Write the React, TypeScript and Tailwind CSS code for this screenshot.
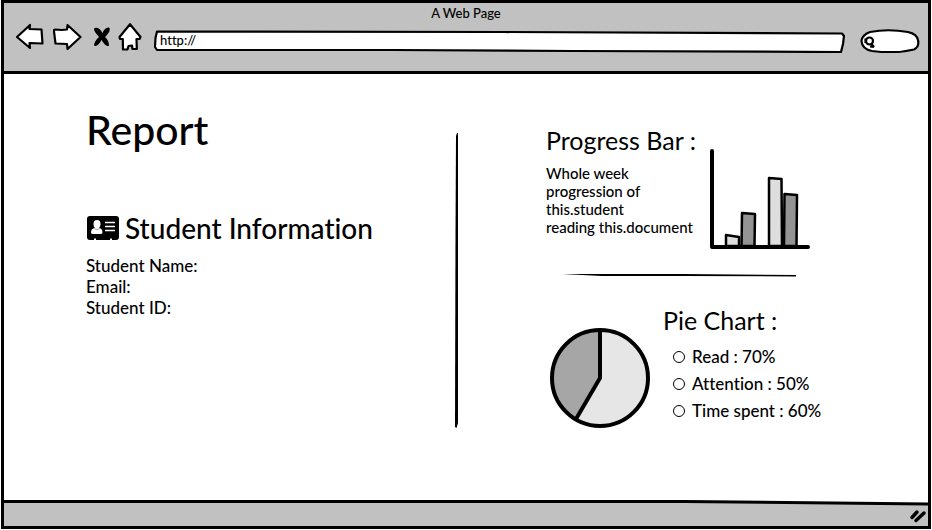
import type { ReactNode } from "react";

const infoFields = ["Student Name:", "Email:", "Student ID:"];

const pieLegend = [
  { id: "read", label: "Read : 70%" },
  { id: "attention", label: "Attention : 50%" },
  { id: "time", label: "Time spent : 60%" },
];

function NavButton({ label, children }: { label: string; children: ReactNode }) {
  return (
    <button type="button" aria-label={label} className="shrink-0">
      {children}
    </button>
  );
}

function BrowserBar() {
  return (
    <header className="flex h-[71px] flex-col border-b-3 border-black bg-[#c1c1c1]">
      <div className="pt-[2px] text-center text-[13px] leading-4 font-medium">A Web Page</div>
      <div className="flex items-center pr-2 pl-3">
        <div className="flex items-center">
          <NavButton label="Back">
            <svg width="28" height="28" viewBox="0 0 28 28" fill="#fff" stroke="#000" strokeWidth="2.200" strokeLinejoin="round">
              <path d="M1 14 14 2 13.500 6 25.500 6.500 26.500 20.500 13.500 20 14 25Z" />
            </svg>
          </NavButton>
          <NavButton label="Forward">
            <svg className="ml-[9px]" width="30" height="28" viewBox="0 0 30 28" fill="#fff" stroke="#000" strokeWidth="2.200" strokeLinejoin="round">
              <path d="M1 8.500Q.500 6.500 2.500 6.500L8.500 7 14 6.500 14.500 2 27.500 14 14.500 26 14 21 2.500 20.500Z" />
            </svg>
          </NavButton>
          <NavButton label="Stop">
            <svg className="ml-[10px]" width="18" height="20" viewBox="0 0 18 20" fill="#000">
              <path d="M1 1.500C3-.5 7 1 9.500 6 11 2 14.500-.5 16.500 1 17.500 4 15 7 12 10 14.500 12 16 15 16 18.500 14 20.500 11 17 8.500 13 6.500 17 3.500 20 1 18.500 1 16 3 12.500 6 10 3.500 7 1 4.500 1 1.500Z" />
            </svg>
          </NavButton>
          <NavButton label="Home">
            <svg className="ml-[7px]" width="24" height="28" viewBox="0 0 24 28" fill="#fff" stroke="#000" strokeWidth="2.200" strokeLinejoin="round">
              <path d="M12 1.200 22.500 14 21.500 16 18.500 16 18.800 26 14.500 26 14 22.500 10.500 23 9.500 26.500 5 26.500 4.800 16 2 16 1.500 14Z" />
            </svg>
          </NavButton>
        </div>
        <div className="relative mt-2 ml-3 h-6 min-w-0 flex-1">
          <svg className="absolute inset-0 h-full w-full" viewBox="0 0 691 24" preserveAspectRatio="none" fill="#fff" stroke="#000" strokeWidth="2.200" strokeLinejoin="round" aria-hidden="true">
            <path vectorEffect="non-scaling-stroke" d="M3 2.500 350 3 688 4.500 690 7 689 15 687 23 420 22 240 21 3 21 1 18 1.500 9Z" />
          </svg>
          <input aria-label="Address" defaultValue="http://" className="relative block h-[22px] w-full bg-transparent px-[6px] text-[13px] font-medium outline-none" />
        </div>
        <div className="relative mt-2 ml-[15px] h-6 w-[60px] shrink-0">
          <svg className="absolute inset-0 h-full w-full" viewBox="0 0 60 24" fill="none" stroke="#000" strokeWidth="2.200" aria-hidden="true">
            <path d="M10 3Q28-.5 48 3 57 5 58 11 59.500 18 54 20.500 36 25 12 22 2 20 1.500 12 2 6 10 3Z" fill="#fff" />
            <circle cx="9.500" cy="12" r="3.500" />
            <path d="M5.500 9.500 5.500 14M11 14.500 14 18M10 17.500 14 18" />
          </svg>
          <input type="search" aria-label="Search" className="relative block h-6 w-full bg-transparent pr-2 pl-4 text-[13px] outline-none" />
        </div>
      </div>
    </header>
  );
}

function IdCardIcon() {
  return (
    <svg className="shrink-0" width="32" height="24" viewBox="0 0 32 24" aria-hidden="true">
      <path d="M3 0H29Q32 0 32 3V21Q32 24 29 24H25V22.500H23V24H9V22.500H7V24H3Q0 24 0 21V3Q0 0 3 0Z" fill="#000" />
      <path d="M10 4C12.500 4 13.500 5.500 13.500 8 13.500 9.500 13 11 12 12 14.500 12.500 15.500 14 15.500 16.500Q15.500 18 13.500 18H6Q4 18 4 16.500C4 14 5 12.500 8 12 7 11 6.500 9.500 6.500 8 6.500 5.500 7.500 4 10 4Z" fill="#fff" />
      <path d="M18 6.500H28M18 10.500H28M18 14.500H28" stroke="#fff" strokeWidth="1.500" />
      <path d="M7 12.500Q10 15 13 12.500" fill="none" stroke="#888" strokeWidth="0.700" />
    </svg>
  );
}

function StudentPanel() {
  return (
    <section className="min-w-0 pt-8 pl-[82px]">
      <h1 className="text-[41px] leading-[48px] font-medium">Report</h1>
      <div className="mt-14 flex items-center gap-[6px] pl-px">
        <IdCardIcon />
        <h2 className="text-[28px] leading-9 font-medium whitespace-nowrap">Student Information</h2>
      </div>
      <ul className="mt-[9px] text-[17px] leading-[21px] font-medium">
        {infoFields.map((field) => (
          <li key={field}>{field}</li>
        ))}
      </ul>
    </section>
  );
}

function BarChart() {
  return (
    <svg className="mt-[25px] shrink-0" width="102" height="102" viewBox="0 0 102 102" role="img" aria-label="Weekly reading progress">
      <g stroke="#000" strokeWidth="2.500" strokeLinejoin="round">
        <path d="M18 97 18 86 31 88 31 97Z" fill="#dedede" />
        <path d="M33.500 97 34 64 47 65 46.500 97Z" fill="#949494" />
        <path d="M61 97 61 29 73.500 30 74 97Z" fill="#dedede" />
        <path d="M76 97 76.500 45 89 46 88.500 97Z" fill="#949494" />
      </g>
      <path d="M4 2V98H100" fill="none" stroke="#000" strokeWidth="4" strokeLinecap="round" strokeLinejoin="round" />
    </svg>
  );
}

function PieChart() {
  return (
    <svg className="mt-[23px] shrink-0" width="102" height="102" viewBox="0 0 102 102" role="img" aria-label="Reading share">
      <circle cx="51" cy="51" r="48" fill="#e6e6e6" />
      <path d="M51 51V3A48 48 0 0 0 27 92.500Z" fill="#a6a6a6" />
      <g fill="none" stroke="#000" strokeWidth="4">
        <circle cx="51" cy="51" r="48" />
        <path d="M51 3V51L27 92" strokeLinejoin="round" />
      </g>
    </svg>
  );
}

function ChartsPanel() {
  return (
    <section className="min-w-0 pt-[50px] pl-[87px]">
      <div className="flex">
        <div className="w-[162px] shrink-0">
          <h2 className="text-[25px] leading-8 whitespace-nowrap">Progress Bar :</h2>
          <p className="mt-2 text-[15px] leading-[18px] font-medium whitespace-nowrap">
            Whole week
            <br />
            progression of
            <br />
            this.student
            <br />
            reading this.document
          </p>
        </div>
        <BarChart />
      </div>
      <svg className="mt-[23px] ml-4 block" width="234" height="4" viewBox="0 0 234 4" aria-hidden="true">
        <path d="M0 0 120 0 234 1 234 2.500 120 2 40 2Z" fill="#000" />
      </svg>
      <div className="mt-[26px] flex gap-3 pl-[3px]">
        <PieChart />
        <div>
          <h2 className="text-[25px] leading-8 whitespace-nowrap">Pie Chart :</h2>
          <fieldset className="mt-[7px] pl-[10px]">
            {pieLegend.map(({ id, label }) => (
              <div key={id} className="flex h-[27px] items-center gap-[7px]">
                <input id={id} type="radio" name="metric" className="size-3 appearance-none rounded-full border border-black bg-white" />
                <label htmlFor={id} className="text-[17px] leading-5 font-medium whitespace-nowrap">
                  {label}
                </label>
              </div>
            ))}
          </fieldset>
        </div>
      </div>
    </section>
  );
}

export default function App() {
  return (
    <div className="flex min-h-screen flex-col bg-white px-px pb-px font-['Lato',sans-serif] text-black [font-variant-ligatures:none]">
      <div className="flex flex-1 flex-col border-3 border-black">
        <BrowserBar />
        <main className="grid flex-1 grid-cols-[451fr_4px_469fr]">
          <StudentPanel />
          <svg className="mt-[59px]" width="4" height="295" viewBox="0 0 4 295" aria-hidden="true">
            <path d="M1 3 2 0 3 0 3 290 1.500 295 0 294 .5 100Z" fill="#000" />
          </svg>
          <ChartsPanel />
        </main>
        <footer className="relative flex h-[26px] items-center justify-end pr-px">
          <svg className="absolute inset-0 h-full w-full" viewBox="0 0 924 26" preserveAspectRatio="none" aria-hidden="true">
            <path d="M0 1.500H680L924 4V26H0Z" fill="#c1c1c1" />
            <path d="M0 1.500H680L924 4" fill="none" stroke="#000" strokeWidth="3" vectorEffect="non-scaling-stroke" />
          </svg>
          <svg className="relative mt-[6px]" width="18" height="14" viewBox="0 0 18 14" stroke="#000" strokeWidth="3.500" strokeLinecap="round" aria-hidden="true">
            <path d="M3 8.500 8 3M7 11.500 15 4" />
          </svg>
        </footer>
      </div>
    </div>
  );
}
